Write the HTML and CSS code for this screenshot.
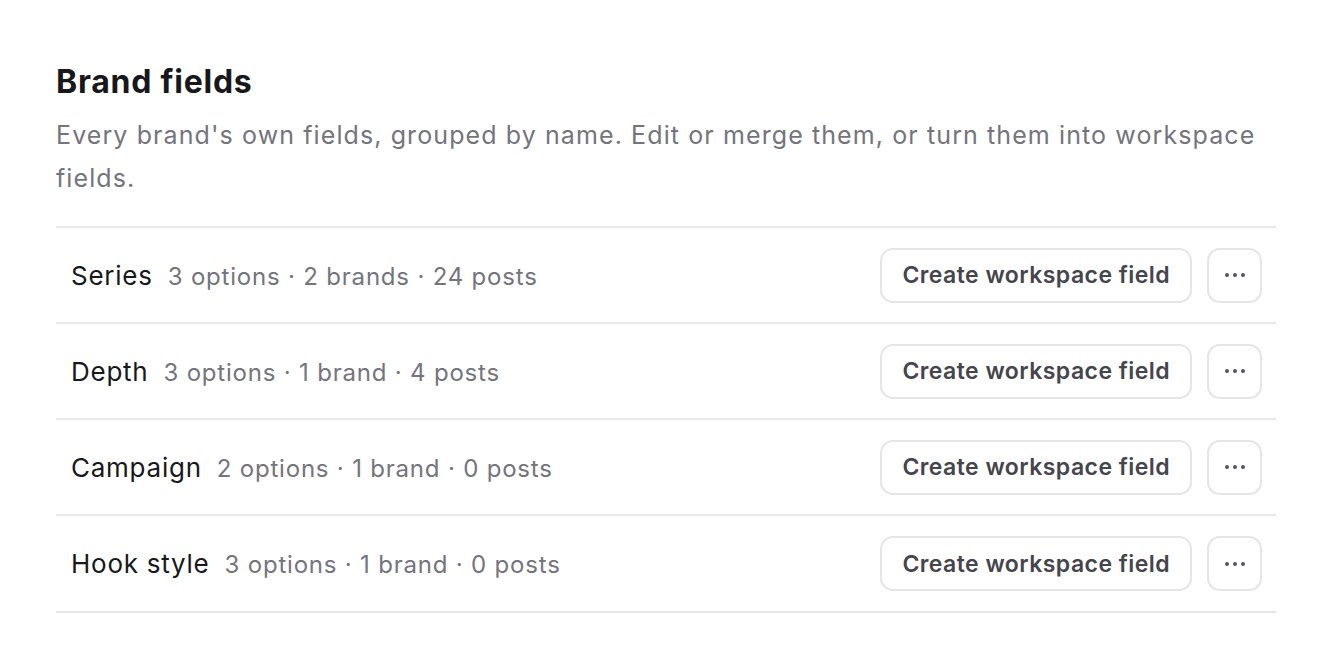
FILE: index.html
```html
<!DOCTYPE html>
<html>
<head>
<meta charset="utf-8">
<link rel="stylesheet" href="styles.css">
</head>
<body>
<main class="page">
  <h1 class="title">Brand fields</h1>
  <p class="desc">Every brand's own fields, grouped by name. Edit or merge them, or turn them into workspace fields.</p>
  <ul class="list">
    <li class="row">
      <div class="info"><span class="name">Series</span><span class="meta">3 options · 2 brands · 24 posts</span></div>
      <div class="actions"><button class="btn">Create workspace field</button><button class="btn more" aria-label="More"><svg width="22" height="6" viewBox="0 0 22 6"><circle cx="3" cy="3" r="2" fill="#55555f"/><circle cx="11" cy="3" r="2" fill="#55555f"/><circle cx="19" cy="3" r="2" fill="#55555f"/></svg></button></div>
    </li>
    <li class="row">
      <div class="info"><span class="name">Depth</span><span class="meta">3 options · 1 brand · 4 posts</span></div>
      <div class="actions"><button class="btn">Create workspace field</button><button class="btn more" aria-label="More"><svg width="22" height="6" viewBox="0 0 22 6"><circle cx="3" cy="3" r="2" fill="#55555f"/><circle cx="11" cy="3" r="2" fill="#55555f"/><circle cx="19" cy="3" r="2" fill="#55555f"/></svg></button></div>
    </li>
    <li class="row">
      <div class="info"><span class="name">Campaign</span><span class="meta">2 options · 1 brand · 0 posts</span></div>
      <div class="actions"><button class="btn">Create workspace field</button><button class="btn more" aria-label="More"><svg width="22" height="6" viewBox="0 0 22 6"><circle cx="3" cy="3" r="2" fill="#55555f"/><circle cx="11" cy="3" r="2" fill="#55555f"/><circle cx="19" cy="3" r="2" fill="#55555f"/></svg></button></div>
    </li>
    <li class="row">
      <div class="info"><span class="name">Hook style</span><span class="meta">3 options · 1 brand · 0 posts</span></div>
      <div class="actions"><button class="btn">Create workspace field</button><button class="btn more" aria-label="More"><svg width="22" height="6" viewBox="0 0 22 6"><circle cx="3" cy="3" r="2" fill="#55555f"/><circle cx="11" cy="3" r="2" fill="#55555f"/><circle cx="19" cy="3" r="2" fill="#55555f"/></svg></button></div>
    </li>
  </ul>
</main>
</body>
</html>
```
FILE: styles.css
```css
* { box-sizing: border-box; }
html, body { margin: 0; padding: 0; background: #ffffff; }
body { font-family: Inter, "Noto Sans", sans-serif; color: #18181b; }
.page { width: 1220px; margin-left: 56px; padding-top: 63px; }
.title { margin: 0; font-size: 32px; line-height: 38px; font-weight: 700; color: #18181b; letter-spacing: 0.75px; }
.desc { margin: 13px 0 26px; font-size: 25px; line-height: 43px; color: #74747d; letter-spacing: 1.1px; }
.list { list-style: none; margin: 0; padding: 0; border-top: 2px solid #e7e7e7; }
.row { height: 96px; display: flex; align-items: center; justify-content: space-between; padding: 0 14px 0 15px; border-bottom: 2px solid #e7e7e7; }
.row:last-child { height: 97px; }
.info { display: flex; align-items: baseline; gap: 15px; }
.name { font-size: 26px; color: #18181b; letter-spacing: 0.75px; }
.meta { font-size: 24px; color: #74747d; letter-spacing: 0.8px; }
.actions { display: flex; gap: 15px; }
.btn { height: 55px; padding: 0 20px; border: 2px solid #e5e5e5; border-radius: 13px; background: #fff; font-family: inherit; font-size: 23px; font-weight: 600; color: #45454d; letter-spacing: 0.45px; display: flex; align-items: center; justify-content: center; }
.more { width: 55px; padding: 0; }
```
